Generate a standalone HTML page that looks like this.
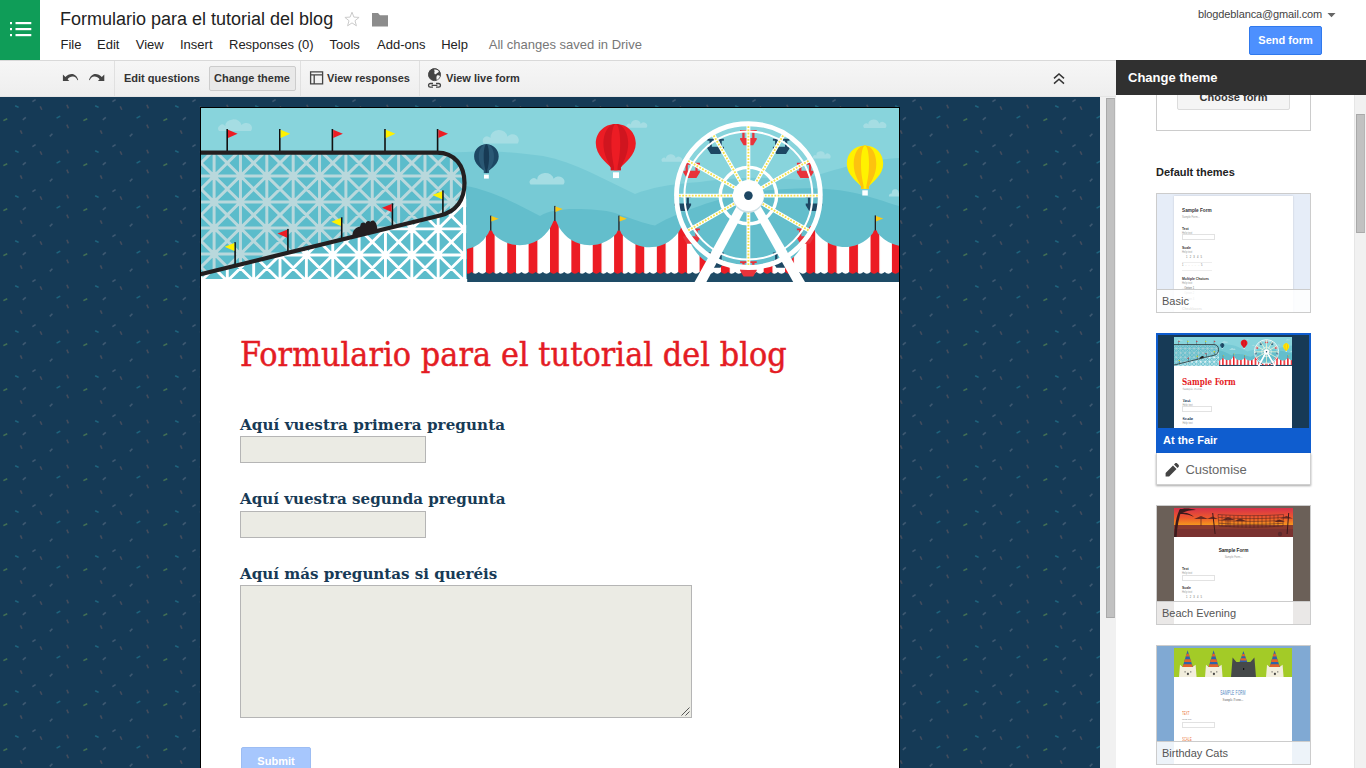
<!DOCTYPE html>
<html lang="en">
<head>
<meta charset="utf-8">
<title>Formulario para el tutorial del blog</title>
<style>
*{box-sizing:border-box;margin:0;padding:0}
html,body{width:1366px;height:768px;overflow:hidden;background:#fff;font-family:"Liberation Sans",Arial,sans-serif;color:#222}
.abs{position:absolute}
#hdr{position:absolute;left:0;top:0;width:1366px;height:60px;background:#fff}
#logo{position:absolute;left:0;top:0;width:40px;height:60px;background:#0f9d58}
#title{position:absolute;left:60px;top:8px;font-size:18px;line-height:22px;color:#222;white-space:nowrap}
#menu{position:absolute;left:52px;top:36px;font-size:13px;line-height:18px;white-space:nowrap;color:#222}
#menu span{position:absolute;top:0}
#menu span.saved{color:#777}
#acct{position:absolute;left:1198px;top:7px;font-size:11px;line-height:14px;color:#444;white-space:nowrap;letter-spacing:-0.12px}
#send{position:absolute;left:1249px;top:26px;width:73px;height:29px;background:#4d90fe;border:1px solid #3079ed;border-radius:2px;color:#fff;font-weight:bold;font-size:11px;line-height:27px;text-align:center}
#tb{position:absolute;left:0;top:60px;width:1116px;height:37px;background:linear-gradient(#f6f6f6,#eee);border-top:1px solid #d9d9d9;border-bottom:1px solid #e5e5e5}
.tbt{position:absolute;top:10px;font-size:11px;line-height:14px;font-weight:bold;color:#333;white-space:nowrap}
.sep{position:absolute;top:0;width:1px;height:35px;background:#e0e0e0}
#ctbtn{position:absolute;left:209px;top:5px;width:87px;height:25px;background:#e9e9e9;border:1px solid #ccc;border-radius:2px}
#main{position:absolute;left:0;top:97px;width:1100px;height:671px;background:#153a56;overflow:hidden}
#mscroll{position:absolute;left:1100px;top:97px;width:16px;height:671px;background:#f1f1f1}
#mthumb{position:absolute;left:6px;top:1px;width:9px;height:520px;background:#c1c1c1;border:1px solid #a9a9a9;border-right-color:#b5b5b5}
#page{position:absolute;left:200px;top:10px;width:700px;height:700px;background:#fff;border:1px solid #000;border-bottom:none}
#ftitle{position:absolute;left:39px;top:227px;-webkit-text-stroke:0.45px #e41c24;font-family:"DejaVu Serif Condensed","DejaVu Serif","Liberation Serif",serif;font-size:33.7px;line-height:40px;letter-spacing:0.08px;color:#e41c24;white-space:nowrap}
.q{position:absolute;left:39px;font-family:"DejaVu Serif","Liberation Serif",serif;font-weight:bold;font-size:15.1px;line-height:18px;color:#173a56;white-space:nowrap}
.inp{position:absolute;left:39px;background:#ebebe4;border:1px solid #b5b5b5}
#submit{position:absolute;left:40px;top:639px;width:70px;height:30px;background:#a7c7fd;border:1px solid #9dbdf3;border-radius:2px;color:#fff;font-weight:bold;font-size:11px;line-height:26px;text-align:center}
#panel{position:absolute;left:1116px;top:60px;width:250px;height:708px;background:#fff;overflow:hidden}
#phead{position:absolute;left:0;top:0;width:250px;height:35px;background:#303030;color:#fff;font-weight:bold;font-size:13px;line-height:36px;padding-left:12px;z-index:5}
#pscroll{position:absolute;left:238px;top:35px;width:12px;height:673px;background:#f1f1f1;border-left:1px solid #e6e6e6}
#pthumb{position:absolute;left:1px;top:19px;width:9px;height:119px;background:#c1c1c1;border:1px solid #a9a9a9;border-right-color:#b5b5b5}
.th{position:absolute;left:40px;width:155px;border:1px solid #ccc;overflow:hidden}
.thl{position:absolute;left:0;bottom:0;width:100%;height:23px;background:rgba(255,255,255,.86);border-top:1px solid #ccc;font-size:11px;line-height:22px;padding-left:5px;color:#555}
.pg{position:absolute;background:#fff;overflow:hidden}
.t1{position:absolute;font-size:4.7px;line-height:6px;font-weight:bold;white-space:nowrap}
.t2{position:absolute;font-size:3.4px;line-height:4.4px;font-weight:bold;white-space:nowrap}
.t3{position:absolute;font-size:2.6px;line-height:3.4px;color:#999;white-space:nowrap}
.mi{position:absolute;width:33px;height:6px;border:1px solid #e2e2e2;background:#fff}
.ln{position:absolute;width:30px;height:1px;background:#eee}
</style>
</head>
<body>
<div id="hdr">
  <div id="logo">
    <svg class="abs" style="left:9px;top:20px" width="24" height="18" viewBox="0 0 24 18"><g fill="#fff"><rect x="1" y="2" width="2" height="2.2"/><rect x="6.5" y="2" width="15.8" height="2.2"/><rect x="1" y="8" width="2" height="2.2"/><rect x="6.5" y="8" width="15.8" height="2.2"/><rect x="1" y="14" width="2" height="2.2"/><rect x="6.5" y="14" width="15.8" height="2.2"/></g></svg>
  </div>
  <div id="title">Formulario para el tutorial del blog</div>
  <svg class="abs" style="left:344px;top:11px" width="16" height="16" viewBox="0 0 16 16"><path d="M8,1.2 L9.9,6.1 L15.1,6.4 L11,9.7 L12.4,14.8 L8,11.9 L3.6,14.8 L5,9.7 L0.9,6.4 L6.1,6.1 Z" fill="none" stroke="#cbcbcb" stroke-width="1" stroke-linejoin="miter"/></svg>
  <svg class="abs" style="left:371px;top:12px" width="18" height="16" viewBox="0 0 18 16"><path d="M1,1 h6 l2,2.3 h8 v11.2 h-16 Z" fill="#8c8c8c"/></svg>
  <div id="menu"><span style="left:8.5px">File</span><span style="left:45px">Edit</span><span style="left:83.80000000000001px">View</span><span style="left:128px">Insert</span><span style="left:177px">Responses (0)</span><span style="left:277.5px">Tools</span><span style="left:325px">Add-ons</span><span style="left:389.2px">Help</span><span class="saved" style="left:436.8px">All changes saved in Drive</span></div>
  <div id="acct">blogdeblanca@gmail.com</div>
  <svg class="abs" style="left:1327px;top:12px" width="9" height="6" viewBox="0 0 9 6"><path d="M0.5,1 h8 l-4,4.2 Z" fill="#666"/></svg>
  <div id="send">Send form</div>
</div>
<div id="tb">
  <svg class="abs" style="left:62px;top:11px" width="17" height="12" viewBox="0 0 17 12"><path d="M0.9,2.4 L0.9,9 L7.3,9 L5.6,7.2 C7,5.4 9,4.3 11,4.5 C13,4.7 14.6,6 15.5,8.3 L16.2,8 C15.6,5.4 14,3 11.5,2.2 C8.6,1.4 5.6,2.8 3.4,5 Z" fill="#444"/></svg>
  <svg class="abs" style="left:88px;top:11px" width="17" height="12" viewBox="0 0 17 12"><g transform="translate(17.2,0) scale(-1,1)"><path d="M0.9,2.4 L0.9,9 L7.3,9 L5.6,7.2 C7,5.4 9,4.3 11,4.5 C13,4.7 14.6,6 15.5,8.3 L16.2,8 C15.6,5.4 14,3 11.5,2.2 C8.6,1.4 5.6,2.8 3.4,5 Z" fill="#444"/></g></svg>
  <div class="sep" style="left:114px"></div>
  <div class="tbt" style="left:124px">Edit questions</div>
  <div id="ctbtn"></div>
  <div class="tbt" style="left:214px">Change theme</div>
  <div class="sep" style="left:300px"></div>
  <svg class="abs" style="left:309px;top:9px" width="15" height="15" viewBox="0 0 15 15"><path d="M1.6,1.8 h12 v12 h-12 Z M1.6,4.9 h12 M5.2,4.9 v8.9" fill="none" stroke="#444" stroke-width="1.3"/></svg>
  <div class="tbt" style="left:327px">View responses</div>
  <div class="sep" style="left:419px"></div>
  <svg class="abs" style="left:427px;top:7px" width="16" height="21" viewBox="0 0 16 21"><circle cx="7.5" cy="6.6" r="6" fill="#444" stroke="#444" stroke-width="1"/><path d="M7.2,1.6 C9,1.2 10.8,2 11.9,3.4 C11.4,4.6 10.2,4.6 9.6,5.6 C9,6.6 7.8,6.4 7.4,5.4 C7,4.4 8,3.6 7.4,2.8 C7.2,2.4 7.1,2 7.2,1.6 Z M10,7.4 C11,7 12.4,7.2 13,8 C12.6,9.8 11.4,11.2 9.8,11.9 C9.4,10.6 9.2,8.6 10,7.4 Z" fill="#f5f5f5"/><path d="M6,15.5 h-2.6 a1.85,1.85 0 0 0 0,3.7 h2.6 M9,15.5 h2.6 a1.85,1.85 0 0 1 0,3.7 h-2.6 M4.6,17.35 h5.8" fill="none" stroke="#444" stroke-width="1.3"/></svg>
  <div class="tbt" style="left:446px">View live form</div>
  <svg class="abs" style="left:1053px;top:12px" width="12" height="12" viewBox="0 0 12 12"><path d="M1,5.4 L6,1 L11,5.4 M1,10.6 L6,6.2 L11,10.6" fill="none" stroke="#333" stroke-width="1.5"/></svg>
</div>
<div id="main">
  <svg class="abs" style="left:0;top:0" width="1100" height="671"><defs><pattern id="confetti" x="0" y="0" width="80" height="45" patternUnits="userSpaceOnUse">
    <g stroke-width="1.5" stroke-linecap="butt" opacity="0.6">
      <path d="M32.4,4.7 l3.2,-2" stroke="#5a6d84"/>
      <path d="M15.2,8.8 l3.4,1.6" stroke="#237f97"/>
      <path d="M40.2,9.4 l1.6,3.4" stroke="#64585f"/>
      <path d="M66.8,7.8 l1.6,3.6" stroke="#64585f"/>
      <path d="M3.4,23.6 l3.8,-1.8" stroke="#5f9350"/>
      <path d="M22.8,22.8 l3,-2.4" stroke="#5a6d84"/>
      <path d="M56.6,21.2 l3.6,-2" stroke="#237f97"/>
      <path d="M66.8,27.6 l1.6,3.6" stroke="#64585f"/>
      <path d="M20.4,33.4 l1.6,3.4" stroke="#64585f"/>
      <path d="M49.8,39.4 l2.6,-2.6" stroke="#5a6d84"/>
    </g></pattern></defs><rect width="1100" height="671" fill="url(#confetti)"/></svg>
  <div id="page">
<svg class="abs" style="left:0;top:0" width="698" height="174" viewBox="201 108 698 174">
<defs>
<pattern id="stripes" x="464.5" y="0" width="21.37" height="300" patternUnits="userSpaceOnUse"><rect x="0" y="0" width="21.37" height="300" fill="#fff"/><rect x="0" y="0" width="8.8" height="300" fill="#ec1c24"/></pattern>
<clipPath id="cUp"><path d="M201,152.6 L437,152.6 C455,152.6 464.5,166 464.5,183 C464.5,200 456,211.6 440,215.5 L201,274 Z"/></clipPath>
<clipPath id="cLow"><path d="M201,274 L440,215.5 C456,211.6 464.5,200 465,190 L466.2,190 L466.2,279 L201,279 Z"/></clipPath>
</defs>
<g id="fairg">
<rect x="201" y="108" width="698" height="174" fill="#88d4dc"/>
<path fill="#a5dde3" d="M219,131 a3.7,3.7 0 0 1 6.4,-4.8 a7.4,5.8 0 0 1 16.0,-1.1 a4.8,4.2 0 0 1 9.6,5.8 Z"/>
<path fill="#a5dde3" d="M627,127.8 a2.5,2.5 0 0 1 3.9,-3.2 a4.5,3.9 0 0 1 9.8,-0.7 a2.9,2.8 0 0 1 5.8,3.9 Z"/>
<path fill="#a5dde3" d="M864,128 a2.7,2.7 0 0 1 4.3,-3.5 a4.9,4.2 0 0 1 10.8,-0.8 a3.2,3.1 0 0 1 6.5,4.2 Z"/>
<path fill="#a5dde3" d="M483.7,143.5 a4.3,4.3 0 0 1 6.8,-5.5 a7.8,6.8 0 0 1 17.0,-1.2 a5.1,4.9 0 0 1 10.2,6.8 Z"/>
<path fill="#77cad5" d="M430,153 L466,152 C490,150 520,153 543,156 C575,162 605,180 635,194 C650,188 670,184 700,182 C730,178 760,176 800,180 C830,172 860,160 899,158 L899,282 L430,282 Z"/>
<path fill="#a5dde3" d="M662,161.7 a2.3,2.3 0 0 1 3.9,-3.0 a4.5,3.7 0 0 1 9.8,-0.7 a2.9,2.7 0 0 1 5.8,3.7 Z"/>
<path fill="#a5dde3" d="M530.5,184.6 a3.7,3.7 0 0 1 6.6,-4.8 a7.6,5.8 0 0 1 16.5,-1.1 a5.0,4.2 0 0 1 9.9,5.8 Z"/>
<path fill="#a5dde3" d="M466,203 a2.6,2.6 0 0 1 3.5,-3.3 a4.1,4.1 0 0 1 8.8,-0.7 a2.7,3.0 0 0 1 5.3,4.1 Z"/>
<path fill="#a5dde3" d="M813,158.6 a2.3,2.3 0 0 1 3.4,-3.0 a3.9,3.6 0 0 1 8.5,-0.7 a2.5,2.6 0 0 1 5.1,3.6 Z"/>
<path fill="#a5dde3" d="M889,196.5 a2.3,2.3 0 0 1 2.8,-2.9 a3.2,3.6 0 0 1 7.0,-0.7 a2.1,2.6 0 0 1 4.2,3.6 Z"/>
<path fill="#a5dde3" d="M820,218 a2.1,2.1 0 0 1 2.4,-2.7 a2.8,3.3 0 0 1 6.0,-0.6 a1.8,2.4 0 0 1 3.6,3.3 Z"/>
<path fill="#63becc" d="M430,184 L466,186 C490,190 520,205 540,216 C548,211 560,209 575,209 C590,209 605,210 615,213 C630,218 645,224 655,225.5 C670,216 710,200 750,192 C790,188 820,186 850,192 C870,196 885,202 899,206 L899,282 L466,282 Z"/>
<clipPath id="cTent"><path d="M467,282 L467,249 Q480,247 488.2,233.4 L489.5,230.4 L491.9,230.4 L493.2,233.4 A35.5,35.5 0 0 0 552.3,223.7 L553.5999999999999,220.7 L556.0,220.7 L557.3,223.7 A35.5,35.5 0 0 0 616.4,233.4 L617.6999999999999,230.4 L620.1,230.4 L621.4,233.4 A35.5,35.5 0 0 0 680.5,229 L681.8,226 L684.2,226 L685.5,229 C690,248 703,265.5 719,265.5 L775.2,265.5 C791.2,265.5 804.2,248 808.7,229 L810.0,226 L812.4000000000001,226 L813.7,229 A35.5,35.5 0 0 0 872.8,233.2 L874.0999999999999,230.2 L876.5,230.2 L877.8,233.2 A35.5,35.5 0 0 0 936.9,227 L938.1999999999999,224 L940.6,224 L941.9,227 L960,282 Z"/></clipPath>
<rect x="467" y="200" width="432" height="74" fill="url(#stripes)" clip-path="url(#cTent)"/>
<clipPath id="cBase"><rect x="467" y="260" width="432" height="22"/></clipPath>
<path fill="#1e4b66" d="M457.38,282 L457.38,272 q3.56,3.4 7.123,0 q3.56,3.4 7.123,0 q3.56,3.4 7.123,0 q3.56,3.4 7.123,0 q3.56,3.4 7.123,0 q3.56,3.4 7.123,0 q3.56,3.4 7.123,0 q3.56,3.4 7.123,0 q3.56,3.4 7.123,0 q3.56,3.4 7.123,0 q3.56,3.4 7.123,0 q3.56,3.4 7.123,0 q3.56,3.4 7.123,0 q3.56,3.4 7.123,0 q3.56,3.4 7.123,0 q3.56,3.4 7.123,0 q3.56,3.4 7.123,0 q3.56,3.4 7.123,0 q3.56,3.4 7.123,0 q3.56,3.4 7.123,0 q3.56,3.4 7.123,0 q3.56,3.4 7.123,0 q3.56,3.4 7.123,0 q3.56,3.4 7.123,0 q3.56,3.4 7.123,0 q3.56,3.4 7.123,0 q3.56,3.4 7.123,0 q3.56,3.4 7.123,0 q3.56,3.4 7.123,0 q3.56,3.4 7.123,0 q3.56,3.4 7.123,0 q3.56,3.4 7.123,0 q3.56,3.4 7.123,0 q3.56,3.4 7.123,0 q3.56,3.4 7.123,0 q3.56,3.4 7.123,0 q3.56,3.4 7.123,0 q3.56,3.4 7.123,0 q3.56,3.4 7.123,0 q3.56,3.4 7.123,0 q3.56,3.4 7.123,0 q3.56,3.4 7.123,0 q3.56,3.4 7.123,0 q3.56,3.4 7.123,0 q3.56,3.4 7.123,0 q3.56,3.4 7.123,0 q3.56,3.4 7.123,0 q3.56,3.4 7.123,0 q3.56,3.4 7.123,0 q3.56,3.4 7.123,0 q3.56,3.4 7.123,0 q3.56,3.4 7.123,0 q3.56,3.4 7.123,0 q3.56,3.4 7.123,0 q3.56,3.4 7.123,0 q3.56,3.4 7.123,0 q3.56,3.4 7.123,0 q3.56,3.4 7.123,0 q3.56,3.4 7.123,0 q3.56,3.4 7.123,0 q3.56,3.4 7.123,0 q3.56,3.4 7.123,0 q3.56,3.4 7.123,0 L906.1,282 Z" clip-path="url(#cBase)"/>
<rect x="490.1" y="215.6" width="1.3" height="15" fill="#231f20"/>
<path fill="#fbc916" d="M491.4,216.1 l7.3,2.6 l-7.3,2.9 Z"/>
<rect x="554.2" y="205.9" width="1.3" height="15" fill="#231f20"/>
<path fill="#fbc916" d="M555.5,206.4 l7.3,2.6 l-7.3,2.9 Z"/>
<rect x="618.3" y="215.6" width="1.3" height="15" fill="#231f20"/>
<path fill="#fbc916" d="M619.6,216.1 l7.3,2.6 l-7.3,2.9 Z"/>
<rect x="874.7" y="215.4" width="1.3" height="15" fill="#231f20"/>
<path fill="#fbc916" d="M876.0,215.9 l7.3,2.6 l-7.3,2.9 Z"/>
<rect x="938.8" y="209.2" width="1.3" height="15" fill="#231f20"/>
<path fill="#fbc916" d="M940.1,209.7 l7.3,2.6 l-7.3,2.9 Z"/>
<g clip-path="url(#cUp)"><rect x="201" y="150" width="270" height="130" fill="#5bbccb"/><path d="M187.74,150.0V280.0M214.10,150.0V280.0M240.46,150.0V280.0M266.82,150.0V280.0M293.18,150.0V280.0M319.54,150.0V280.0M345.90,150.0V280.0M372.26,150.0V280.0M398.62,150.0V280.0M424.98,150.0V280.0M451.34,150.0V280.0M477.70,150.0V280.0M187.7,150.00H477.7M187.7,176.00H477.7M187.7,202.00H477.7M187.7,228.00H477.7M187.7,254.00H477.7M187.7,280.00H477.7M55.94,150.0L187.74,280.0M187.74,150.0L55.94,280.0M82.30,150.0L214.10,280.0M214.10,150.0L82.30,280.0M108.66,150.0L240.46,280.0M240.46,150.0L108.66,280.0M135.02,150.0L266.82,280.0M266.82,150.0L135.02,280.0M161.38,150.0L293.18,280.0M293.18,150.0L161.38,280.0M187.74,150.0L319.54,280.0M319.54,150.0L187.74,280.0M214.10,150.0L345.90,280.0M345.90,150.0L214.10,280.0M240.46,150.0L372.26,280.0M372.26,150.0L240.46,280.0M266.82,150.0L398.62,280.0M398.62,150.0L266.82,280.0M293.18,150.0L424.98,280.0M424.98,150.0L293.18,280.0M319.54,150.0L451.34,280.0M451.34,150.0L319.54,280.0M345.90,150.0L477.70,280.0M477.70,150.0L345.90,280.0M372.26,150.0L504.06,280.0M504.06,150.0L372.26,280.0M398.62,150.0L530.42,280.0M530.42,150.0L398.62,280.0M424.98,150.0L556.78,280.0M556.78,150.0L424.98,280.0M451.34,150.0L583.14,280.0M583.14,150.0L451.34,280.0M477.70,150.0L609.50,280.0M609.50,150.0L477.70,280.0" fill="none" stroke="#b9d8dc" stroke-width="3"/></g>
<g clip-path="url(#cLow)"><rect x="201" y="185" width="270" height="100" fill="#5bbccb"/><path d="M174.58,176.7V281.1M200.94,176.7V281.1M227.30,176.7V281.1M253.66,176.7V281.1M280.02,176.7V281.1M306.38,176.7V281.1M332.74,176.7V281.1M359.10,176.7V281.1M385.46,176.7V281.1M411.82,176.7V281.1M438.18,176.7V281.1M464.54,176.7V281.1M174.6,176.70H464.5M174.6,202.80H464.5M174.6,228.90H464.5M174.6,255.00H464.5M174.6,281.10H464.5M69.14,176.7L174.58,281.1M174.58,176.7L69.14,281.1M95.50,176.7L200.94,281.1M200.94,176.7L95.50,281.1M121.86,176.7L227.30,281.1M227.30,176.7L121.86,281.1M148.22,176.7L253.66,281.1M253.66,176.7L148.22,281.1M174.58,176.7L280.02,281.1M280.02,176.7L174.58,281.1M200.94,176.7L306.38,281.1M306.38,176.7L200.94,281.1M227.30,176.7L332.74,281.1M332.74,176.7L227.30,281.1M253.66,176.7L359.10,281.1M359.10,176.7L253.66,281.1M280.02,176.7L385.46,281.1M385.46,176.7L280.02,281.1M306.38,176.7L411.82,281.1M411.82,176.7L306.38,281.1M332.74,176.7L438.18,281.1M438.18,176.7L332.74,281.1M359.10,176.7L464.54,281.1M464.54,176.7L359.10,281.1M385.46,176.7L490.90,281.1M490.90,176.7L385.46,281.1M411.82,176.7L517.26,281.1M517.26,176.7L411.82,281.1M438.18,176.7L543.62,281.1M543.62,176.7L438.18,281.1M464.54,176.7L569.98,281.1M569.98,176.7L464.54,281.1" fill="none" stroke="#fff" stroke-width="2.9"/></g>
<rect x="201" y="279" width="266.2" height="3" fill="#fff"/>
<rect x="226.4" y="129" width="1.6" height="23" fill="#111"/>
<path fill="#ec1c24" d="M228.0,129.8 l9.6,3.9 l-9.6,4.3 Z"/>
<rect x="279.0" y="129" width="1.6" height="23" fill="#111"/>
<path fill="#fff200" d="M280.6,129.8 l9.6,3.9 l-9.6,4.3 Z"/>
<rect x="331.6" y="129" width="1.6" height="23" fill="#111"/>
<path fill="#ec1c24" d="M333.2,129.8 l9.6,3.9 l-9.6,4.3 Z"/>
<rect x="384.2" y="129" width="1.6" height="23" fill="#111"/>
<path fill="#fff200" d="M385.8,129.8 l9.6,3.9 l-9.6,4.3 Z"/>
<rect x="436.8" y="129" width="1.6" height="23" fill="#111"/>
<path fill="#ec1c24" d="M438.4,129.8 l9.6,3.9 l-9.6,4.3 Z"/>
<rect x="234.3" y="242.2" width="1.6" height="23.5" fill="#111"/>
<path fill="#fff200" d="M234.3,243.0 l-9.6,3.7 l9.6,4.3 Z"/>
<rect x="287.1" y="228.9" width="1.6" height="23.8" fill="#111"/>
<path fill="#ec1c24" d="M287.1,229.7 l-9.6,3.7 l9.6,4.3 Z"/>
<rect x="340.9" y="217.3" width="1.6" height="22.3" fill="#111"/>
<path fill="#fff200" d="M340.9,218.1 l-9.6,3.7 l9.6,4.3 Z"/>
<rect x="391.6" y="203.3" width="1.6" height="23.9" fill="#111"/>
<path fill="#ec1c24" d="M391.6,204.1 l-9.6,3.7 l9.6,4.3 Z"/>
<rect x="442.1" y="190.4" width="1.6" height="24.4" fill="#111"/>
<path fill="#fff200" d="M442.1,191.2 l-9.6,3.7 l9.6,4.3 Z"/>
<path d="M200,152.6 L437,152.6 C455,152.6 464.5,166 464.5,183 C464.5,200 456,211.6 440,215.5 L200,274.3" fill="none" stroke="#231f20" stroke-width="4.2"/>
<path fill="#231f20" d="M352.5,237 C352,231 355,227.5 360,226.5 L361,223.5 C362.5,222 364.5,222 365.5,223.5 L366.3,222 C367.5,220.8 369.5,220.8 370.3,222 L371,221 C372.5,220 374.5,220.3 375,222 C376.5,223.5 377.3,226 377.3,230.5 Z"/>
<path fill="#1d4763" d="M486.4,144.3 C494.0,144.3 498.7,150.0 498.7,156.4 C498.7,163.8 491.3,168.4 488.9,170.4 L488.9,173 L483.9,173 L483.9,170.4 C481.4,168.4 474.1,163.8 474.1,156.4 C474.1,150.0 478.8,144.3 486.4,144.3 Z"/><path fill="#2a5874" d="M486.4,144.3 C491.1,144.3 494.0,150.0 494.0,156.4 C494.0,163.8 490.2,168.4 488.9,170.4 L488.9,173 L483.9,173 L483.9,170.4 C482.6,168.4 478.8,163.8 478.8,156.4 C478.8,150.0 481.7,144.3 486.4,144.3 Z"/><path fill="#173a54" d="M486.4,144.3 C488.1,144.3 489.1,150.0 489.1,156.4 C489.1,163.8 487.7,168.4 487.3,170.4 L487.3,173 L485.5,173 L485.5,170.4 C485.1,168.4 483.7,163.8 483.7,156.4 C483.7,150.0 484.7,144.3 486.4,144.3 Z"/>
<rect x="484" y="174.6" width="4.8" height="4" fill="#fff"/>
<path fill="#ec1c24" d="M615.8,123.9 C628.2,123.9 635.8,133.2 635.8,143.3 C635.8,155.4 624.5,162.8 620.8,167.6 L620.8,170.2 L610.8,170.2 L610.8,167.6 C607.0,162.8 595.8,155.4 595.8,143.3 C595.8,133.2 603.4,123.9 615.8,123.9 Z"/><path fill="#d0151f" d="M615.8,123.9 C623.5,123.9 628.2,133.2 628.2,143.3 C628.2,155.4 622.6,162.8 620.8,167.6 L620.8,170.2 L610.8,170.2 L610.8,167.6 C609.0,162.8 603.4,155.4 603.4,143.3 C603.4,133.2 608.1,123.9 615.8,123.9 Z"/><path fill="#ec1c24" d="M615.8,123.9 C618.5,123.9 620.2,133.2 620.2,143.3 C620.2,155.4 618.2,162.8 617.6,167.6 L617.6,170.2 L614.0,170.2 L614.0,167.6 C613.4,162.8 611.4,155.4 611.4,143.3 C611.4,133.2 613.1,123.9 615.8,123.9 Z"/>
<rect x="613" y="172.3" width="6" height="5.8" fill="#fff"/>
<path fill="#fff200" d="M865,145.5 C876.3,145.5 883.2,154.2 883.2,163.7 C883.2,174.9 872.5,181.9 869.0,186.2 L869.0,188.8 L861.0,188.8 L861.0,186.2 C857.5,181.9 846.8,174.9 846.8,163.7 C846.8,154.2 853.7,145.5 865,145.5 Z"/><path fill="#fdc20f" d="M865,145.5 C872.0,145.5 876.3,154.2 876.3,163.7 C876.3,174.9 870.8,181.9 869.0,186.2 L869.0,188.8 L861.0,188.8 L861.0,186.2 C859.2,181.9 853.7,174.9 853.7,163.7 C853.7,154.2 858.0,145.5 865,145.5 Z"/><path fill="#fff200" d="M865,145.5 C867.5,145.5 869.0,154.2 869.0,163.7 C869.0,174.9 867.1,181.9 866.4,186.2 L866.4,188.8 L863.6,188.8 L863.6,186.2 C862.9,181.9 861.0,174.9 861.0,163.7 C861.0,154.2 862.5,145.5 865,145.5 Z"/>
<rect x="862.3" y="190.3" width="5.5" height="5.2" fill="#fff"/>
<g>
<path fill="#e8333b" d="M740.1,130.0 L746.8,130.0 L746.8,131.9 L744.6,131.9 L744.6,138.0 L742.3,138.0 L742.3,131.9 L740.1,131.9 Z M756.7,130.0 L750.0,130.0 L750.0,131.9 L752.2,131.9 L752.2,138.0 L754.5,138.0 L754.5,131.9 L756.7,131.9 Z M740.1,137.9 L756.7,137.9 L756.7,139.6 L753.2,145.3 L743.6,145.3 L740.1,139.6 Z "/>
<path fill="#1d4763" d="M772.9,138.8 L779.6,138.8 L779.6,140.7 L777.4,140.7 L777.4,146.8 L775.1,146.8 L775.1,140.7 L772.9,140.7 Z M789.5,138.8 L782.8,138.8 L782.8,140.7 L785.0,140.7 L785.0,146.8 L787.3,146.8 L787.3,140.7 L789.5,140.7 Z M772.9,146.7 L789.5,146.7 L789.5,148.4 L786.0,154.1 L776.4,154.1 L772.9,148.4 Z "/>
<path fill="#e8333b" d="M796.9,162.8 L803.6,162.8 L803.6,164.7 L801.4,164.7 L801.4,170.8 L799.1,170.8 L799.1,164.7 L796.9,164.7 Z M813.5,162.8 L806.8,162.8 L806.8,164.7 L809.0,164.7 L809.0,170.8 L811.3,170.8 L811.3,164.7 L813.5,164.7 Z M796.9,170.7 L813.5,170.7 L813.5,172.4 L810.0,178.1 L800.4,178.1 L796.9,172.4 Z "/>
<path fill="#1d4763" d="M805.7,195.6 L812.4,195.6 L812.4,197.5 L810.2,197.5 L810.2,203.6 L807.9,203.6 L807.9,197.5 L805.7,197.5 Z M822.3,195.6 L815.6,195.6 L815.6,197.5 L817.8,197.5 L817.8,203.6 L820.1,203.6 L820.1,197.5 L822.3,197.5 Z M805.7,203.5 L822.3,203.5 L822.3,205.2 L818.8,210.9 L809.2,210.9 L805.7,205.2 Z "/>
<path fill="#e8333b" d="M796.9,228.4 L803.6,228.4 L803.6,230.3 L801.4,230.3 L801.4,236.4 L799.1,236.4 L799.1,230.3 L796.9,230.3 Z M813.5,228.4 L806.8,228.4 L806.8,230.3 L809.0,230.3 L809.0,236.4 L811.3,236.4 L811.3,230.3 L813.5,230.3 Z M796.9,236.3 L813.5,236.3 L813.5,238.0 L810.0,243.7 L800.4,243.7 L796.9,238.0 Z "/>
<path fill="#1d4763" d="M772.9,252.4 L779.6,252.4 L779.6,254.3 L777.4,254.3 L777.4,260.4 L775.1,260.4 L775.1,254.3 L772.9,254.3 Z M789.5,252.4 L782.8,252.4 L782.8,254.3 L785.0,254.3 L785.0,260.4 L787.3,260.4 L787.3,254.3 L789.5,254.3 Z M772.9,260.3 L789.5,260.3 L789.5,262.0 L786.0,267.7 L776.4,267.7 L772.9,262.0 Z "/>
<path fill="#e8333b" d="M740.1,261.2 L746.8,261.2 L746.8,263.1 L744.6,263.1 L744.6,269.2 L742.3,269.2 L742.3,263.1 L740.1,263.1 Z M756.7,261.2 L750.0,261.2 L750.0,263.1 L752.2,263.1 L752.2,269.2 L754.5,269.2 L754.5,263.1 L756.7,263.1 Z M740.1,269.1 L756.7,269.1 L756.7,270.8 L753.2,276.5 L743.6,276.5 L740.1,270.8 Z "/>
<path fill="#1d4763" d="M707.3,252.4 L714.0,252.4 L714.0,254.3 L711.8,254.3 L711.8,260.4 L709.5,260.4 L709.5,254.3 L707.3,254.3 Z M723.9,252.4 L717.2,252.4 L717.2,254.3 L719.4,254.3 L719.4,260.4 L721.7,260.4 L721.7,254.3 L723.9,254.3 Z M707.3,260.3 L723.9,260.3 L723.9,262.0 L720.4,267.7 L710.8,267.7 L707.3,262.0 Z "/>
<path fill="#e8333b" d="M683.3,228.4 L690.0,228.4 L690.0,230.3 L687.8,230.3 L687.8,236.4 L685.5,236.4 L685.5,230.3 L683.3,230.3 Z M699.9,228.4 L693.2,228.4 L693.2,230.3 L695.4,230.3 L695.4,236.4 L697.7,236.4 L697.7,230.3 L699.9,230.3 Z M683.3,236.3 L699.9,236.3 L699.9,238.0 L696.4,243.7 L686.8,243.7 L683.3,238.0 Z "/>
<path fill="#1d4763" d="M674.5,195.6 L681.2,195.6 L681.2,197.5 L679.0,197.5 L679.0,203.6 L676.7,203.6 L676.7,197.5 L674.5,197.5 Z M691.1,195.6 L684.4,195.6 L684.4,197.5 L686.6,197.5 L686.6,203.6 L688.9,203.6 L688.9,197.5 L691.1,197.5 Z M674.5,203.5 L691.1,203.5 L691.1,205.2 L687.6,210.9 L678.0,210.9 L674.5,205.2 Z "/>
<path fill="#e8333b" d="M683.3,162.8 L690.0,162.8 L690.0,164.7 L687.8,164.7 L687.8,170.8 L685.5,170.8 L685.5,164.7 L683.3,164.7 Z M699.9,162.8 L693.2,162.8 L693.2,164.7 L695.4,164.7 L695.4,170.8 L697.7,170.8 L697.7,164.7 L699.9,164.7 Z M683.3,170.7 L699.9,170.7 L699.9,172.4 L696.4,178.1 L686.8,178.1 L683.3,172.4 Z "/>
<path fill="#1d4763" d="M707.3,138.8 L714.0,138.8 L714.0,140.7 L711.8,140.7 L711.8,146.8 L709.5,146.8 L709.5,140.7 L707.3,140.7 Z M723.9,138.8 L717.2,138.8 L717.2,140.7 L719.4,140.7 L719.4,146.8 L721.7,146.8 L721.7,140.7 L723.9,140.7 Z M707.3,146.7 L723.9,146.7 L723.9,148.4 L720.4,154.1 L710.8,154.1 L707.3,148.4 Z "/>
<circle cx="748.4" cy="195.6" r="71.9" fill="none" stroke="#fff" stroke-width="4.9"/>
<circle cx="748.4" cy="195.6" r="64" fill="none" stroke="#fff" stroke-width="2"/>
<circle cx="748.4" cy="195.6" r="28.2" fill="none" stroke="#fff" stroke-width="3.4"/>
<line x1="748.4" y1="185.6" x2="748.4" y2="125.6" stroke="#fff" stroke-width="3.8"/>
<line x1="748.4" y1="185.6" x2="748.4" y2="125.6" stroke="#f4e24a" stroke-width="1.9" stroke-dasharray="1.8 1.4"/>
<line x1="753.4" y1="186.9" x2="783.4" y2="135.0" stroke="#fff" stroke-width="3.8"/>
<line x1="753.4" y1="186.9" x2="783.4" y2="135.0" stroke="#f4e24a" stroke-width="1.9" stroke-dasharray="1.8 1.4"/>
<line x1="757.1" y1="190.6" x2="809.0" y2="160.6" stroke="#fff" stroke-width="3.8"/>
<line x1="757.1" y1="190.6" x2="809.0" y2="160.6" stroke="#f4e24a" stroke-width="1.9" stroke-dasharray="1.8 1.4"/>
<line x1="758.4" y1="195.6" x2="818.4" y2="195.6" stroke="#fff" stroke-width="3.8"/>
<line x1="758.4" y1="195.6" x2="818.4" y2="195.6" stroke="#f4e24a" stroke-width="1.9" stroke-dasharray="1.8 1.4"/>
<line x1="757.1" y1="200.6" x2="809.0" y2="230.6" stroke="#fff" stroke-width="3.8"/>
<line x1="757.1" y1="200.6" x2="809.0" y2="230.6" stroke="#f4e24a" stroke-width="1.9" stroke-dasharray="1.8 1.4"/>
<line x1="753.4" y1="204.3" x2="783.4" y2="256.2" stroke="#fff" stroke-width="3.8"/>
<line x1="753.4" y1="204.3" x2="783.4" y2="256.2" stroke="#f4e24a" stroke-width="1.9" stroke-dasharray="1.8 1.4"/>
<line x1="748.4" y1="205.6" x2="748.4" y2="265.6" stroke="#fff" stroke-width="3.8"/>
<line x1="748.4" y1="205.6" x2="748.4" y2="265.6" stroke="#f4e24a" stroke-width="1.9" stroke-dasharray="1.8 1.4"/>
<line x1="743.4" y1="204.3" x2="713.4" y2="256.2" stroke="#fff" stroke-width="3.8"/>
<line x1="743.4" y1="204.3" x2="713.4" y2="256.2" stroke="#f4e24a" stroke-width="1.9" stroke-dasharray="1.8 1.4"/>
<line x1="739.7" y1="200.6" x2="687.8" y2="230.6" stroke="#fff" stroke-width="3.8"/>
<line x1="739.7" y1="200.6" x2="687.8" y2="230.6" stroke="#f4e24a" stroke-width="1.9" stroke-dasharray="1.8 1.4"/>
<line x1="738.4" y1="195.6" x2="678.4" y2="195.6" stroke="#fff" stroke-width="3.8"/>
<line x1="738.4" y1="195.6" x2="678.4" y2="195.6" stroke="#f4e24a" stroke-width="1.9" stroke-dasharray="1.8 1.4"/>
<line x1="739.7" y1="190.6" x2="687.8" y2="160.6" stroke="#fff" stroke-width="3.8"/>
<line x1="739.7" y1="190.6" x2="687.8" y2="160.6" stroke="#f4e24a" stroke-width="1.9" stroke-dasharray="1.8 1.4"/>
<line x1="743.4" y1="186.9" x2="713.4" y2="135.0" stroke="#fff" stroke-width="3.8"/>
<line x1="743.4" y1="186.9" x2="713.4" y2="135.0" stroke="#f4e24a" stroke-width="1.9" stroke-dasharray="1.8 1.4"/>
<path fill="#fff" d="M738.4,203 L748.6,203 L706.4,282 L694.6,282 Z"/>
<path fill="#fff" d="M749,203 L758.8,203 L805,282 L793.2,282 Z"/>
<circle cx="748.4" cy="197.2" r="15.5" fill="#cfe0e6"/>
<circle cx="748.4" cy="195.6" r="15.5" fill="#fff"/>
<circle cx="748.4" cy="195.6" r="4.3" fill="#1d4763"/>
</g>
</g>
</svg>
    <div id="ftitle">Formulario para el tutorial del blog</div>
    <div class="q" style="top:308px;letter-spacing:0.1px">Aquí vuestra primera pregunta</div>
    <div class="inp" style="top:328px;width:186px;height:27px"></div>
    <div class="q" style="top:382px">Aquí vuestra segunda pregunta</div>
    <div class="inp" style="top:403px;width:186px;height:27px"></div>
    <div class="q" style="top:457px">Aquí más preguntas si queréis</div>
    <div class="inp" style="top:477px;width:452px;height:133px"><svg class="abs" style="right:1px;bottom:1px" width="9" height="9" viewBox="0 0 9 9"><path d="M8.5,0.5 L0.5,8.5 M8.5,4.5 L4.5,8.5" stroke="#555" stroke-width="1" fill="none"/></svg></div>
    <div id="submit">Submit</div>
  </div>
</div>
<div id="mscroll"><div id="mthumb"></div></div>
<div id="panel">
  <div id="phead">Change theme</div>
  <div class="abs" style="left:40px;top:0;width:155px;height:71px;border:1px solid #ccc"></div>
  <div class="abs" style="left:61px;top:23px;width:113px;height:27px;background:#f5f5f5;border:1px solid #dcdcdc;border-radius:2px;font-size:11px;font-weight:bold;color:#333;text-align:center;line-height:27px">Choose form</div>
  <div class="abs" style="left:40px;top:105px;font-size:11px;line-height:14px;font-weight:bold;color:#222">Default themes</div>

  <!-- Basic -->
  <div class="th" style="top:133px;height:120px;background:#e6edf8">
    <div class="pg" style="left:17px;top:2px;width:119px;height:120px;box-shadow:0 0 2px rgba(0,0,0,.15)">
      <div class="t1" style="left:8px;top:11.7px;color:#333">Sample Form</div>
      <div class="t3" style="left:8px;top:20px">Sample Form...</div>
      <div class="t2" style="left:8px;top:31px;color:#333">Text</div>
      <div class="t3" style="left:8px;top:36.4px">Help text</div>
      <div class="mi" style="left:7.5px;top:38px"></div>
      <div class="t2" style="left:8px;top:50px;color:#333">Scale</div>
      <div class="t3" style="left:8px;top:55.4px">Help text</div>
      <div class="t3" style="left:12px;top:60.4px;letter-spacing:2.2px;color:#666">12345</div>
      <div class="ln" style="left:8px;top:66px"></div>
      <div class="t3" style="left:8px;top:68.4px;letter-spacing:1.6px;color:#777">1○○○○○5</div>
      <div class="ln" style="left:8px;top:74.4px"></div>
      <div class="t2" style="left:8px;top:81px;color:#333">Multiple Choices</div>
      <div class="t3" style="left:8px;top:86.4px">Help text</div>
      <div class="t3" style="left:8px;top:91px;color:#666">○ Option 1</div>
      <div class="t3" style="left:8px;top:96.4px;color:#666">○ Option 2</div>
      <div class="t3" style="left:8px;top:101.6px;color:#666">○ Option 3</div>
      <div class="t2" style="left:8px;top:111px;color:#333">Checkboxes</div>
    </div>
    <div class="thl">Basic</div>
  </div>

  <!-- At the Fair (selected) -->
  <div class="abs" style="left:40px;top:273px;width:155px;height:120px;background:#0f5dcf"></div>
  <div class="abs" style="left:42px;top:275px;width:151px;height:93px;background:#173a56;overflow:hidden">
    <div class="pg" style="left:16.4px;top:1.8px;width:118px;height:100px">
      <svg class="abs" style="left:0;top:0" width="118" height="29.4" viewBox="201 108 698 174"><use href="#fairg"/></svg>
      <div class="abs" style="left:7.4px;top:40px;font-family:'DejaVu Serif Condensed','DejaVu Serif',serif;font-weight:bold;font-size:8.9px;line-height:11px;color:#e41c24;white-space:nowrap;transform:scaleX(.91);transform-origin:0 0">Sample Form</div>
      <div class="t3" style="left:8px;top:50.8px;font-family:'DejaVu Serif',serif;font-size:2.9px">Sample Form...</div>
      <div class="t2" style="left:8px;top:62px;color:#173a56;font-family:'DejaVu Serif',serif;font-size:3.6px">Text</div>
      <div class="t3" style="left:8px;top:67px">Help text</div>
      <div class="mi" style="left:7.6px;top:69px;width:29.6px"></div>
      <div class="t2" style="left:8px;top:80px;color:#173a56;font-family:'DejaVu Serif',serif;font-size:3.6px">Scale</div>
      <div class="t3" style="left:8px;top:85px">Help text</div>
    </div>
  </div>
  <div class="abs" style="left:47px;top:372.6px;font-size:11px;line-height:14px;font-weight:bold;color:#fff;white-space:nowrap">At the Fair</div>
  <div class="abs" style="left:40px;top:393px;width:155px;height:32px;background:#fff;border:1px solid #d0d0d0;border-top:none;box-shadow:0 1px 2px rgba(0,0,0,.35)">
    <svg class="abs" style="left:8px;top:10px" width="15" height="14" viewBox="0 0 15 14"><path d="M0.6,9.9 L8,2.5 L11.5,6 L4.1,13.4 L0.6,13.4 Z M9,1.5 L10,0.5 C10.6,-0.1 11.6,-0.1 12.2,0.5 L13.5,1.8 C14.1,2.4 14.1,3.4 13.5,4 L12.5,5 Z" fill="#444"/></svg>
    <div class="abs" style="left:28.4px;top:7.6px;font-size:13px;line-height:18px;color:#666">Customise</div>
  </div>

  <!-- Beach Evening -->
  <div class="th" style="top:445px;height:120px;background:#6b6058">
    <div class="pg" style="left:17px;top:2px;width:119px;height:120px">
      <svg class="abs" style="left:0;top:0" width="119" height="29" viewBox="0 0 119 29">
        <defs><linearGradient id="sun" x1="0" y1="0" x2="0" y2="1"><stop offset="0" stop-color="#d6314a"/><stop offset="0.35" stop-color="#ee5a2c"/><stop offset="0.62" stop-color="#f6a11b"/></linearGradient></defs>
        <rect width="119" height="29" fill="url(#sun)"/>
        <rect y="17" width="119" height="12" fill="#8b3a2e"/>
        <rect y="21" width="119" height="8" fill="#7a3230"/>
        <path d="M0,29 C1,18 2,8 6,1 L8,1 C5,9 3,19 2.6,29 Z M5,2 C9,0 15,0 22,2 C16,2 12,3 8,5 C12,4 17,6 20,9 C14,6 10,6 6,6 Z" fill="#3a1a1c"/>
        <path d="M20,11 l7,-3 l7,3 Z M26.6,11 h0.8 v7 h-0.8 Z M33,11 l5.5,-2.4 l5.5,2.4 Z M48,12 l6,-3 l7,3 Z M53.6,12 h0.8 v6 h-0.8 Z M61,13 l5,-2.4 l6,2.4 Z M100,14 l5.5,-2.6 l5.5,2.6 Z M106,10.6 l6.5,-2.6 l6.5,2.6 Z" fill="#6a2a22"/>
        <path d="M38.2,5 l1,0 l2.4,21 l-1,0 Z M114.2,5 l1,0 l-1.6,21 l-1,0 Z" fill="#3a1a1c"/>
        <g stroke="#4a201e" stroke-width="0.5" fill="none"><path d="M44,6.5 C65,8 90,8 109.5,6.5 L109,18 C88,19.6 66,19.6 45,18 Z"/><path d="M44.3,9.4 C65,11 90,11 109.3,9.4 M44.6,12.2 C65,13.8 90,13.8 109.2,12.2 M44.8,15.2 C65,16.8 90,16.8 109.1,15.2"/><path d="M48,7 v11.4 M52,7.2 v11.5 M56,7.4 v11.6 M60,7.5 v11.7 M64,7.6 v11.8 M68,7.6 v11.9 M72,7.7 v11.9 M76,7.7 v11.9 M80,7.7 v11.9 M84,7.6 v11.9 M88,7.6 v11.8 M92,7.5 v11.7 M96,7.4 v11.6 M100,7.2 v11.5 M104,7 v11.4"/></g>
        <circle cx="106" cy="26" r="2.2" fill="#5c2a2c"/>
      </svg>
      <div class="t1" style="left:0;width:119px;text-align:center;top:39.5px;color:#222">Sample Form</div>
      <div class="t3" style="left:0;width:119px;text-align:center;top:47.6px">Sample Form...</div>
      <div class="t2" style="left:8px;top:58.6px;color:#333">Text</div>
      <div class="t3" style="left:8px;top:64px">Help text</div>
      <div class="mi" style="left:7.5px;top:67px"></div>
      <div class="t2" style="left:8px;top:77.8px;color:#333">Scale</div>
      <div class="t3" style="left:8px;top:83px">Help text</div>
      <div class="t3" style="left:12px;top:88px;letter-spacing:2.2px;color:#666">12345</div>
    </div>
    <div class="thl">Beach Evening</div>
  </div>

  <!-- Birthday Cats -->
  <div class="th" style="top:585px;height:120px;background:#80a9d3">
    <div class="pg" style="left:17px;top:2px;width:118px;height:120px">
      <svg class="abs" style="left:0;top:0" width="118" height="29.4" viewBox="0 0 118 30" preserveAspectRatio="none">
        <rect width="118" height="30" fill="#a3cb27"/>
        <g id="cat1"><path d="M5,30 L6,17 L8.6,19.4 L18.6,19.4 L21.6,17 L22.6,30 Z" fill="#f2eedd"/><path d="M13.6,2.4 L18.8,19.4 L8.6,19.4 Z" fill="#2f62a8"/><path d="M12.6,5.8 h2 l0.9,2.8 h-3.8 Z M10.9,11.4 h5.5 l0.9,2.8 h-7.3 Z M9.4,16.6 h8.5 l0.8,2.8 h-10.1 Z" fill="#e2622b"/><path d="M10.4,24.4 h1.4 M16,24.4 h1.4 M13.4,25.6 h1 v1.6 h-1 Z" stroke="#333" stroke-width="0.7" fill="#333"/></g>
        <use href="#cat1" x="26"/>
        <use href="#cat1" x="87"/>
        <path d="M57,30 L58.6,9.6 L62.4,14.4 L76.4,14.4 L80.4,9.6 L82,30 Z" fill="#45494a"/>
        <path d="M69.4,3 L73.2,14.4 L65.6,14.4 Z" fill="#2f62a8"/><path d="M68.4,6 h2 l0.8,2.4 h-3.6 Z M67,10.4 h4.8 l0.8,2.4 h-6.4 Z" fill="#e2622b"/>
        <path d="M69,20.4 h1.2 v2 h-1.2 Z" fill="#111"/>
      </svg>
      <div class="abs" style="left:0;width:118px;text-align:center;top:40px;font-size:7px;line-height:9px;color:#4a80bd;transform:scaleX(.46);letter-spacing:.4px;white-space:nowrap">SAMPLE FORM</div>
      <div class="t3" style="left:0;width:118px;text-align:center;top:50.8px;color:#666;font-family:'Liberation Serif',serif;font-size:3.4px">Sample Form...</div>
      <div class="abs" style="left:8px;top:62px;font-size:5.4px;line-height:7px;color:#ec7b3c;transform:scaleX(.55);transform-origin:0 0;white-space:nowrap">TEXT</div>
      <div class="t3" style="left:8px;top:69.6px;color:#555;font-family:'Liberation Serif',serif">Help text</div>
      <div class="mi" style="left:7.5px;top:73.6px"></div>
      <div class="abs" style="left:8px;top:88px;font-size:5.4px;line-height:7px;color:#ec7b3c;transform:scaleX(.55);transform-origin:0 0;white-space:nowrap">SCALE</div>
    </div>
    <div class="thl">Birthday Cats</div>
  </div>

  <div id="pscroll"><div id="pthumb"></div></div>
</div>
</body>
</html>
